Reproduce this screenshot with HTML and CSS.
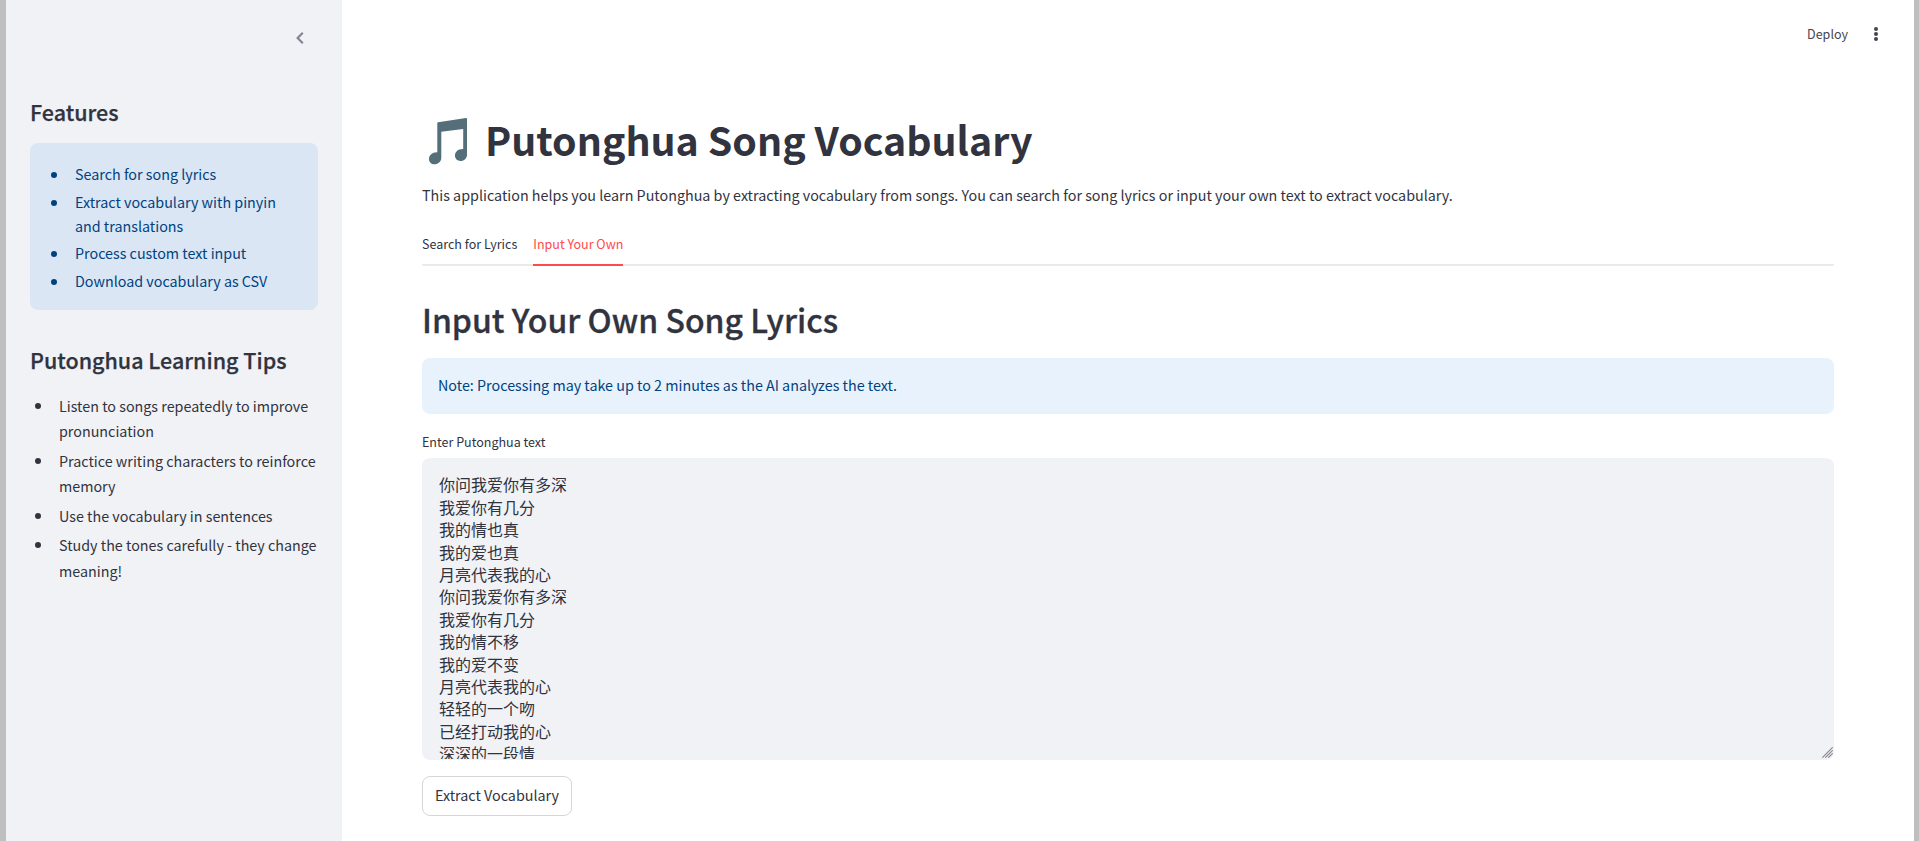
FILE: index.html
```html
<!DOCTYPE html>
<html lang="zh-CN">
<head>
<meta charset="utf-8">
<title>Putonghua Song Vocabulary</title>
<link rel="stylesheet" href="styles.css">
</head>
<body>
<div class="app">
  <aside class="sidebar">
    <div class="sidebar-top">
      <svg class="chevron" width="8" height="12" viewBox="0 0 8 12"><path d="M6.8 0.8 L1.6 6 L6.8 11.2" fill="none" stroke="#808390" stroke-width="2.1"/></svg>
    </div>
    <h3 class="side-title">Features</h3>
    <div class="side-alert">
      <ul class="feature-list">
        <li>Search for song lyrics</li>
        <li>Extract vocabulary with pinyin and translations</li>
        <li>Process custom text input</li>
        <li>Download vocabulary as CSV</li>
      </ul>
    </div>
    <h3 class="side-title tips-title">Putonghua Learning Tips</h3>
    <ul class="tips-list">
      <li>Listen to songs repeatedly to improve pronunciation</li>
      <li>Practice writing characters to reinforce memory</li>
      <li>Use the vocabulary in sentences</li>
      <li>Study the tones carefully - they change meaning!</li>
    </ul>
  </aside>
  <main class="main">
    <header class="toolbar">
      <span class="deploy">Deploy</span>
      <svg class="dots" width="6" height="16" viewBox="0 0 6 16"><g fill="#44464f"><circle cx="3" cy="3" r="2"/><circle cx="3" cy="8" r="2"/><circle cx="3" cy="13" r="2"/></g></svg>
    </header>
    <div class="content">
      <h1 class="title">
        <svg class="note" width="40" height="48" viewBox="0 0 40 48"><path fill="#546e7a" d="M9.3 6.1 Q9.3 5.3 10.1 5.2 L38 1.1 Q39 1 39 1.9 V37.5 C39 41.5 36 44 32.6 44 C29.2 44 27 41.8 27 38.6 C27 34.8 30 31.8 35.2 32 V12.1 L13.3 14.7 V40.8 C13.3 44.8 10 47.3 6.4 47.3 C3.2 47.3 1 45.2 1 42 C1 38 4.3 35 9.3 35.2 Z"/></svg>
        <span>Putonghua Song Vocabulary</span>
      </h1>
      <p class="intro">This application helps you learn Putonghua by extracting vocabulary from songs. You can search for song lyrics or input your own text to extract vocabulary.</p>
      <nav class="tabs">
        <span class="tab">Search for Lyrics</span>
        <span class="tab active">Input Your Own</span>
      </nav>
      <h2 class="subtitle">Input Your Own Song Lyrics</h2>
      <div class="alert">Note: Processing may take up to 2 minutes as the AI analyzes the text.</div>
      <div class="label">Enter Putonghua text</div>
      <div class="textarea">
        <div class="lyrics">你问我爱你有多深
我爱你有几分
我的情也真
我的爱也真
月亮代表我的心
你问我爱你有多深
我爱你有几分
我的情不移
我的爱不变
月亮代表我的心
轻轻的一个吻
已经打动我的心
深深的一段情</div>
        <svg class="grip" width="11" height="11" viewBox="0 0 11 11"><path d="M0.3 10.7 L10.7 0.3 M3.3 10.7 L10.7 3.3 M6.3 10.7 L10.7 6.3" stroke="#85868b" stroke-width="1.1"/></svg>
      </div>
      <div><button class="button">Extract Vocabulary</button></div>
    </div>
  </main>
</div>
</body>
</html>
```
FILE: styles.css
```css
* { box-sizing: border-box; margin: 0; padding: 0; }

body {
  width: 1919px;
  height: 841px;
  overflow: hidden;
  background: #fff;
  color: #31333f;
  font-family: "Noto Sans CJK SC", "Noto Sans", sans-serif;
  font-size: 14.32px;
}

.app {
  display: flex;
  height: 841px;
  border-left: 6px solid #bfbfbf;
  border-right: 5px solid #bfbfbf;
}

.sidebar { width: 336px; flex: none; padding: 0 24px; background: #f0f2f6; }
.sidebar-top { height: 98px; display: flex; justify-content: flex-end; padding: 32px 14px 0 0; }
.chevron { display: block; }

.side-title { height: 29px; font-size: 21.5px; font-weight: 500; line-height: 27px; white-space: nowrap; -webkit-text-stroke: 0.25px currentColor; }

.side-alert {
  height: 167px;
  margin-top: 16px;
  padding: 19px 16px 0;
  border-radius: 8px;
  background: #dae6f4;
  color: #004280;
}

.feature-list { padding-left: 29px; line-height: 24px; }
.feature-list li + li { margin-top: 3.7px; }

.tips-title { margin-top: 36px; }
.tips-list { margin-top: 17.8px; padding-left: 29px; line-height: 25.5px; }
.tips-list li { margin-right: -8px; }
.tips-list li + li { margin-top: 4px; }

ul { list-style: none; }
li { position: relative; }
li::before {
  content: "";
  position: absolute;
  left: -24px;
  top: 10px;
  width: 6px;
  height: 6px;
  border-radius: 50%;
  background: currentColor;
}

.main { flex: 1; display: flex; flex-direction: column; }
.toolbar { height: 68px; display: flex; justify-content: flex-end; padding: 23px 35px 0 0; gap: 25px; }
.deploy { font-size: 12.53px; line-height: 21px; color: #44464f; }
.dots { margin-top: 3px; }

.content { padding: 0 80px; }

.title { display: flex; height: 53px; margin-top: 47px; padding-left: 6px; font-size: 39.35px; line-height: 47px; font-weight: 700; white-space: nowrap; }
.note { flex: none; margin: 2px 17px 0 0; }

.intro { margin-top: 14px; line-height: 26px; white-space: nowrap; }

.tabs { display: flex; gap: 16px; height: 42px; margin-top: 16px; border-bottom: 2px solid #e9eaeb; font-size: 12.53px; }
.tab { height: 42px; line-height: 40px; }
.active { color: #ff4b4b; border-bottom: 2px solid #ff4b4b; }

.subtitle { height: 43px; margin-top: 33px; font-size: 32px; font-weight: 500; line-height: 41px; -webkit-text-stroke: 0.3px currentColor; }
.alert { height: 56px; margin-top: 16px; padding: 15px 16px; border-radius: 8px; background: #e8f2fc; color: #004280; line-height: 24px; }
.label { margin-top: 17px; font-size: 12.53px; line-height: 22px; }

.textarea { position: relative; height: 302px; margin-top: 5px; padding: 15.4px 17px 0; border-radius: 8px; background: #f0f2f6; overflow: hidden; }
.lyrics { height: 286px; overflow: hidden; font-size: 16px; line-height: 22.4px; white-space: pre; }
.grip { position: absolute; right: 1px; bottom: 2px; }

.button {
  height: 40px;
  width: 150px;
  margin-top: 16px;
  padding-bottom: 3px;
  border: 1px solid #d6d6d9;
  border-radius: 8px;
  background: #fff;
  color: #31333f;
  font: inherit;
  white-space: nowrap;
}
```
